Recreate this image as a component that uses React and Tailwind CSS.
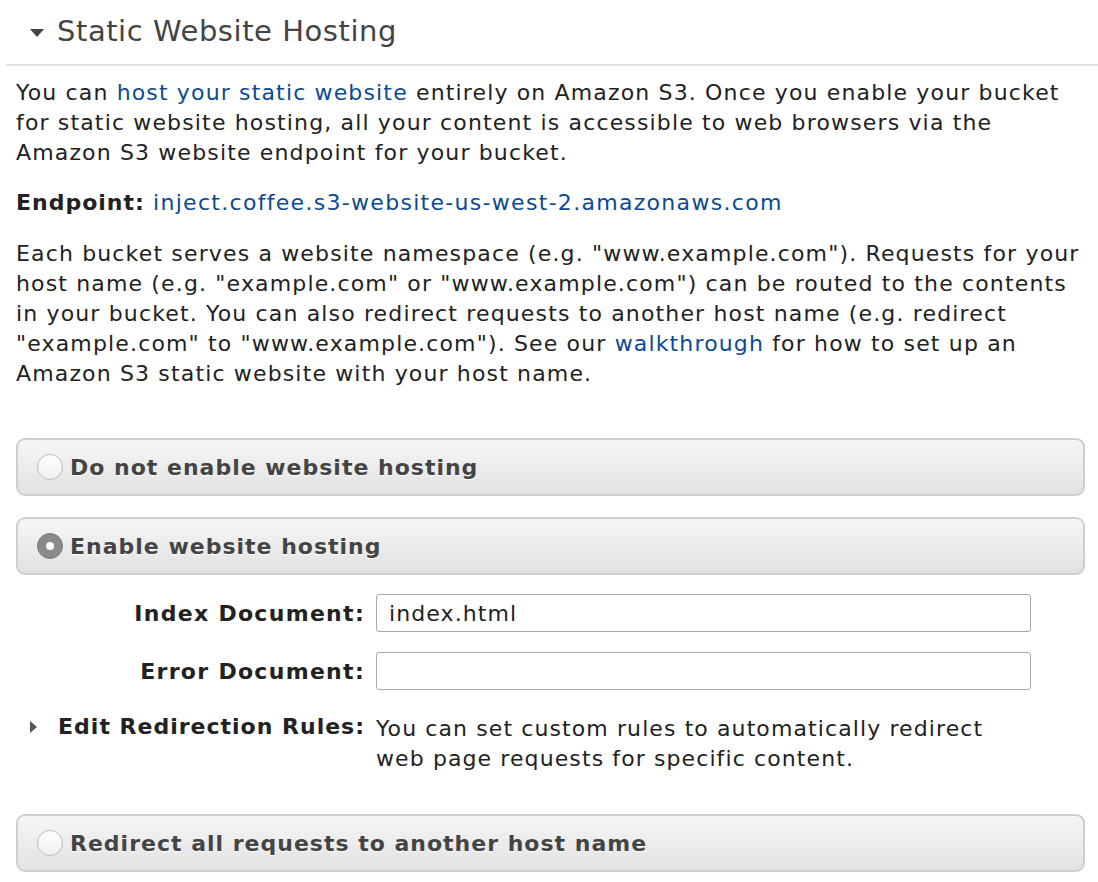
import { useState } from 'react';

const Radio = ({ checked }) => (
  <span
    className={
      checked
        ? 'w-[26px] h-[26px] rounded-full bg-[#8a8a8a] border border-[#7a7a7a] flex items-center justify-center shrink-0'
        : 'w-[26px] h-[26px] rounded-full bg-gradient-to-b from-white to-[#f0f0f0] border border-[#bdbdbd] shrink-0'
    }
  >
    {checked && <span className="w-[8px] h-[8px] rounded-full bg-white" />}
  </span>
);

const Option = ({ label, checked, onClick }) => (
  <button
    onClick={onClick}
    className="w-full h-[58px] flex items-center gap-[7px] pl-[19px] rounded-[9px] border-2 border-[#cfcfcf] bg-gradient-to-b from-[#f6f6f6] to-[#e2e2e2] text-left"
  >
    <Radio checked={checked} />
    <span className="text-[22px] font-bold tracking-[1px] text-[#444] [text-shadow:0_1px_0_#fff]">{label}</span>
  </button>
);

const App = () => {
  const [mode, setMode] = useState('enable');

  return (
    <div className="w-[1098px] min-h-[882px] bg-white pl-[6px] text-[#222] font-['DejaVu_Sans',Verdana,sans-serif]">
      {/* header */}
      <div className="h-[66px] flex items-center pl-[24px] border-b-2 border-[#e3e3e3]">
        <svg width="14" height="8" viewBox="0 0 14 8" className="mr-[13px] mt-[2px]">
          <path d="M0 0h14L7 8z" fill="#444" />
        </svg>
        <h2 className="text-[29px] tracking-[0.55px] text-[#444] font-normal">Static Website Hosting</h2>
      </div>

      <div className="pl-[10px] pr-[13px] tracking-[1.15px]">
        <p className="text-[22px] leading-[30px] mt-[12px] whitespace-nowrap">
          You can <a className="text-[#0b4a94]">host your static website</a> entirely on Amazon S3. Once you enable your bucket
          <br />
          for static website hosting, all your content is accessible to web browsers via the
          <br />
          Amazon S3 website endpoint for your bucket.
        </p>

        <p className="text-[22px] leading-[30px] mt-[20px]">
          <span className="font-bold tracking-[1px]">Endpoint:</span>{' '}
          <a className="text-[#0b4a94] tracking-[1.3px]">inject.coffee.s3-website-us-west-2.amazonaws.com</a>
        </p>

        <p className="text-[22px] leading-[30px] mt-[21px] whitespace-nowrap">
          Each bucket serves a website namespace (e.g. "www.example.com"). Requests for your
          <br />
          host name (e.g. "example.com" or "www.example.com") can be routed to the contents
          <br />
          in your bucket. You can also redirect requests to another host name (e.g. redirect
          <br />
          "example.com" to "www.example.com"). See our <a className="text-[#0b4a94]">walkthrough</a> for how to set up an
          <br />
          Amazon S3 static website with your host name.
        </p>

        <div className="mt-[49px] flex flex-col gap-[21px]">
          <Option label="Do not enable website hosting" checked={mode === 'none'} onClick={() => setMode('none')} />
          <Option label="Enable website hosting" checked={mode === 'enable'} onClick={() => setMode('enable')} />
        </div>

        <div className="grid grid-cols-[349px_655px] gap-x-[11px] gap-y-[20px] mt-[19px] items-center text-[22px]">
          <label className="text-right font-bold tracking-[1.3px]">Index Document:</label>
          <input
            defaultValue="index.html"
            className="h-[38px] border border-[#a9a9a9] rounded-[3px] px-[12px] text-[22px] tracking-[1.1px] text-[#222] outline-none"
          />
          <label className="text-right font-bold tracking-[1.3px]">Error Document:</label>
          <input className="h-[38px] border border-[#a9a9a9] rounded-[3px] px-[12px] text-[22px] outline-none" />

          <div className="self-start flex items-center justify-between pl-[14px] leading-[30px] mt-[2px]">
            <svg width="8" height="12" viewBox="0 0 8 12">
              <path d="M0 0l7 6-7 6z" fill="#555" />
            </svg>
            <span className="font-bold tracking-[1px]">Edit Redirection Rules:</span>
          </div>
          <p className="leading-[30px] mt-[4px] tracking-[1.1px]">
            You can set custom rules to automatically redirect
            <br />
            web page requests for specific content.
          </p>
        </div>

        <div className="mt-[40px]">
          <Option label="Redirect all requests to another host name" checked={mode === 'redirect'} onClick={() => setMode('redirect')} />
        </div>
      </div>
    </div>
  );
};

export default App;
